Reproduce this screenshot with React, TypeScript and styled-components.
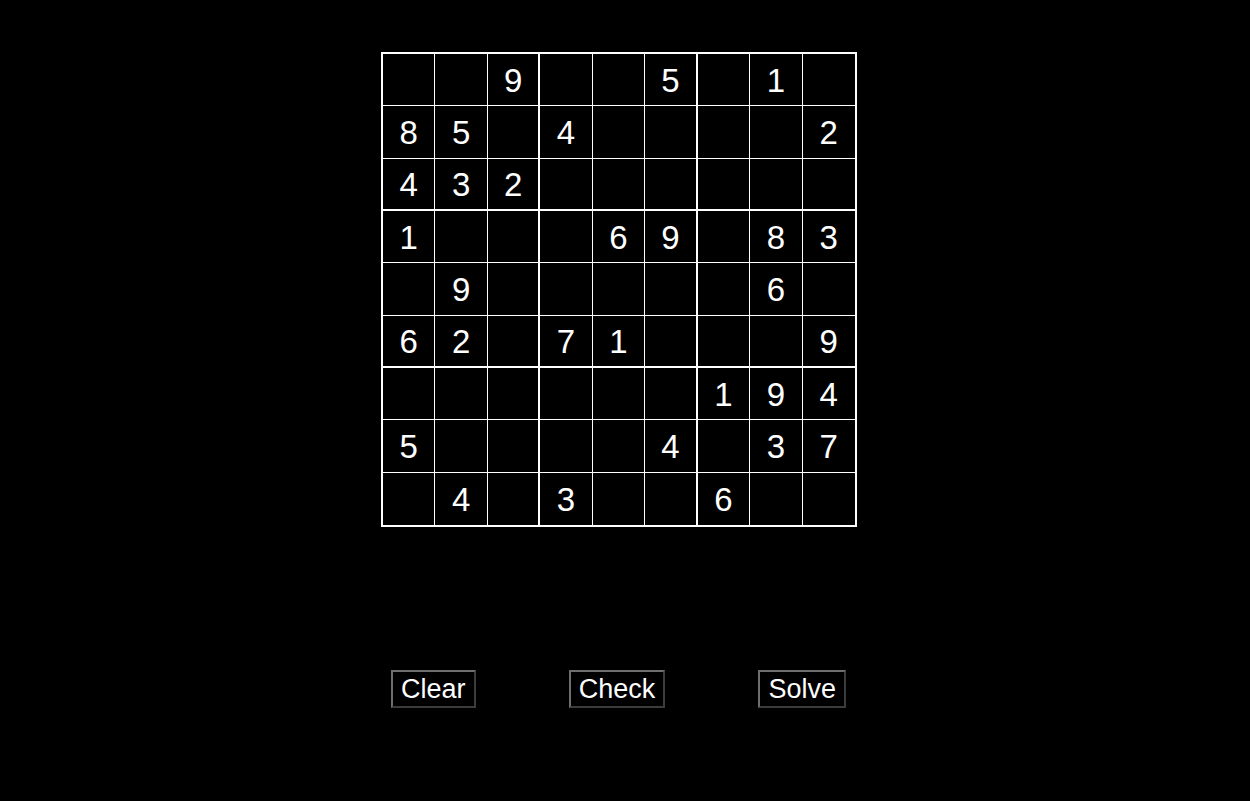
import React from "react";
import styled, { createGlobalStyle } from "styled-components";

const Global = createGlobalStyle`
  html, body {
    margin: 0;
    padding: 0;
    background: #000;
  }
  body {
    font-family: "Liberation Sans", Arial, sans-serif;
  }
`;

const Page = styled.div`
  display: flex;
  flex-direction: column;
  width: 476px;
  padding: 52px 0 0 381px;
`;

const Board = styled.div`
  display: grid;
  grid-template-columns: repeat(9, 1fr);
  grid-template-rows: repeat(9, 1fr);
  width: 476px;
  height: 475px;
  box-sizing: border-box;
  border: 2px solid #fff;
`;

const lineWidth = (i: number) => (i === 8 ? "0" : i === 2 || i === 5 ? "2px" : "1px");

const Cell = styled.div<{ $r: number; $c: number }>`
  box-sizing: border-box;
  display: flex;
  align-items: center;
  justify-content: center;
  border-right: ${(p) => lineWidth(p.$c)} solid #fff;
  border-bottom: ${(p) => lineWidth(p.$r)} solid #fff;
  color: #fff;
  font-family: "Liberation Sans", Arial, sans-serif;
  font-size: 33px;
  padding-top: 3px;
`;

const Controls = styled.div`
  display: flex;
  justify-content: space-between;
  padding: 0 11px 0 10px;
  margin-top: 143px;
`;

const Button = styled.button`
  background: #000;
  color: #fff;
  font-family: "Liberation Sans", Arial, sans-serif;
  font-size: 27px;
  line-height: 30px;
  padding: 2px 8px;
  border: 2px solid;
  border-color: #6e6e6e #3c3c3c #3c3c3c #6e6e6e;
  cursor: pointer;
`;

const puzzle = [
  "..9..5.1.",
  "85.4....2",
  "432......",
  "1...69.83",
  ".9.....6.",
  "62.71...9",
  "......194",
  "5....4.37",
  ".4.3..6..",
];

export default function App() {
  return (
    <>
      <Global />
      <Page>
        <Board>
          {puzzle.map((row, r) =>
            row.split("").map((ch, c) => (
              <Cell key={`${r}-${c}`} $r={r} $c={c}>
                {ch === "." ? "" : ch}
              </Cell>
            ))
          )}
        </Board>
        <Controls>
          <Button>Clear</Button>
          <Button>Check</Button>
          <Button>Solve</Button>
        </Controls>
      </Page>
    </>
  );
}
